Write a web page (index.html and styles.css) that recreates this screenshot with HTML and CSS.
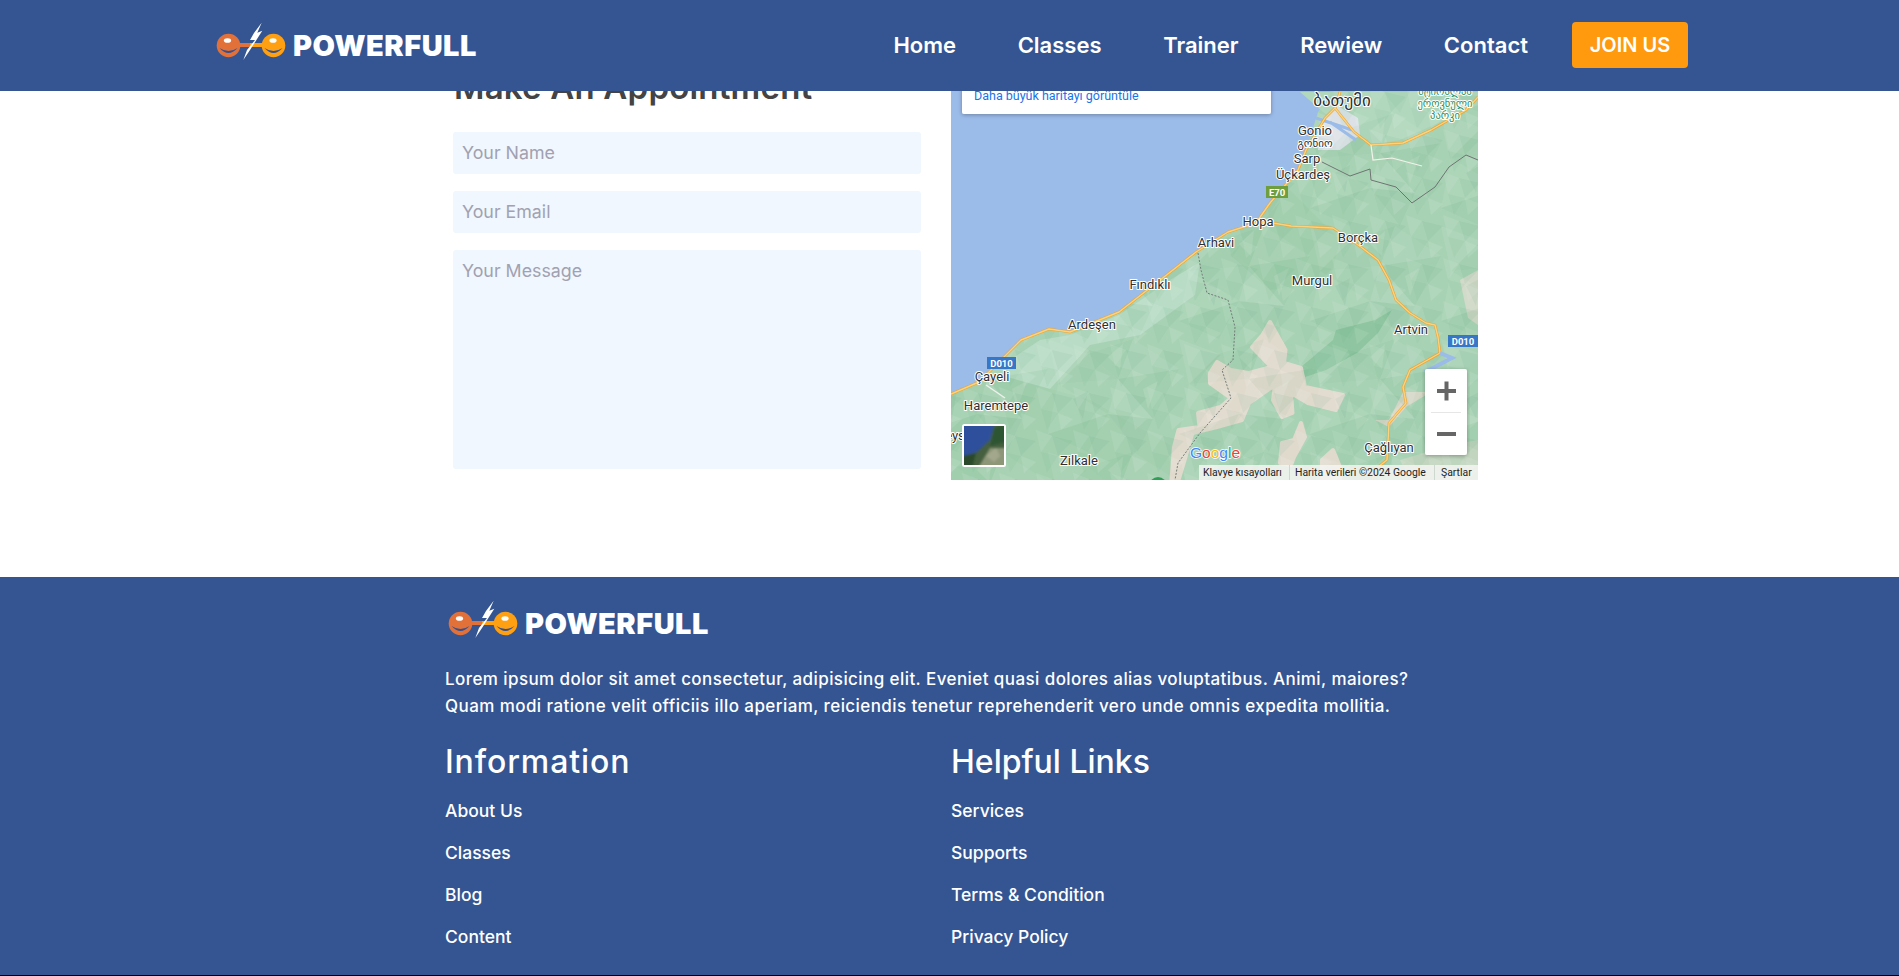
FILE: index.html
```html
<!DOCTYPE html>
<html lang="en">
<head>
<meta charset="utf-8">
<title>Powerfull</title>
<link rel="stylesheet" href="styles.css">
</head>
<body>
<svg class="defs" width="0" height="0" aria-hidden="true">
  <defs>
    <symbol id="logo-mark" viewBox="216 23 70 45">
      <rect x="239" y="43" width="12" height="4" fill="#e27039"/>
      <rect x="250" y="43" width="13" height="4" fill="#ffa012"/>
      <circle cx="228.500" cy="45.500" r="11.800" fill="#e27039"/>
      <circle cx="273.500" cy="45.500" r="11.800" fill="#ffa012"/>
      <ellipse cx="227.500" cy="40.500" rx="3.600" ry="2.300" fill="#fff"/>
      <ellipse cx="273" cy="40.500" rx="3.600" ry="2.300" fill="#fff"/>
      <path d="M219.500 48 q9 10 18 0 q-9 6 -18 0z" fill="#34508f"/>
      <path d="M264.500 48 q9 10 18 0 q-9 6 -18 0z" fill="#34508f"/>
      <polygon points="261.700,22.700 254,33 250,40 255,40 247,50 243.300,60 250,50 262.300,30.700 257.300,32.700" fill="#fff"/>
    </symbol>
    <pattern id="facets-a" width="131" height="113" patternUnits="userSpaceOnUse">
      <polygon points="0,0 40,15 10,45" fill="#fff" opacity=".07"/>
      <polygon points="40,15 85,0 70,40" fill="#3f8f68" opacity=".06"/>
      <polygon points="85,0 131,30 70,40" fill="#fff" opacity=".05"/>
      <polygon points="10,45 40,15 70,40" fill="#3f8f68" opacity=".04"/>
      <polygon points="10,45 60,75 0,95" fill="#fff" opacity=".06"/>
      <polygon points="70,40 131,30 105,80" fill="#3f8f68" opacity=".06"/>
      <polygon points="70,40 105,80 60,75" fill="#fff" opacity=".08"/>
      <polygon points="60,75 105,80 90,113" fill="#3f8f68" opacity=".05"/>
      <polygon points="0,95 60,75 40,113" fill="#3f8f68" opacity=".06"/>
      <polygon points="60,18 75,5 72,30" fill="#fff" opacity=".1"/>
      <polygon points="25,60 40,52 35,80" fill="#3f8f68" opacity=".08"/>
      <polygon points="95,50 110,42 100,70" fill="#fff" opacity=".1"/>
    </pattern>
    <pattern id="facets-b" width="37" height="43" patternUnits="userSpaceOnUse">
      <polygon points="0,0 16,6 5,22" fill="#fff" opacity=".08"/>
      <polygon points="16,6 37,11 22,26" fill="#3f8f68" opacity=".07"/>
      <polygon points="5,22 22,26 11,43" fill="#3f8f68" opacity=".06"/>
      <polygon points="22,26 37,32 25,43" fill="#fff" opacity=".09"/>
    </pattern>
    <filter id="card-shadow" x="-5%" y="-20%" width="110%" height="150%">
      <feDropShadow dx="0" dy="1" stdDeviation="2" flood-color="#000" flood-opacity=".3"/>
    </filter>
    <filter id="thumb-blur"><feGaussianBlur stdDeviation=".8"/></filter>
    <clipPath id="thumb-clip"><rect x="964" y="426" width="40" height="39"/></clipPath>
  </defs>
</svg>

<header class="site-header">
  <a class="brand" href="#">
    <svg class="brand-mark"><use href="#logo-mark"/></svg>
    <span class="brand-text">POWERFULL</span>
  </a>
  <nav class="site-nav">
    <a href="#">Home</a>
    <a href="#">Classes</a>
    <a href="#">Trainer</a>
    <a href="#">Rewiew</a>
    <a href="#">Contact</a>
    <a class="join" href="#">JOIN US</a>
  </nav>
</header>

<main class="appointment">
  <form class="appointment-form">
    <h2>Make An Appointment</h2>
    <input type="text" placeholder="Your Name">
    <input type="email" placeholder="Your Email">
    <textarea placeholder="Your Message"></textarea>
  </form>
  <div class="map">
    <svg class="map-svg" viewBox="951 30 527 450" width="527" height="450" role="img" aria-label="Map">
      <rect x="951" y="30" width="527" height="450" fill="#9bbbe9"/>
      <polygon points="1336,30 1330,95 1318,112 1306,150 1298,170 1287,183 1270,203 1256,223 1228,232 1196,252 1164,277 1119,312 1070,332 1049,329 1021,340 1003,358 979,382 951,394 951,480 1478,480 1478,30" fill="#a8d2b4"/>
      <polygon points="1070,335 1119,315 1170,280 1200,262 1195,295 1140,335 1090,345 1040,400 1000,400 1010,360 1040,340" fill="#b8dcc5"/>
      <polygon points="1290,190 1340,240 1330,280 1270,290 1230,255 1260,225" fill="#a2cfae"/>
      <polygon points="951,394 1000,375 1090,400 1170,445 1175,480 951,480" fill="#a4d0b0"/>
      <polygon points="1300,92 1478,92 1478,105 1400,140 1370,145 1330,118" fill="#b1d8bd"/>
      <polygon points="1301,367 1333,340 1336,330 1375,320 1392,310 1378,333 1357,353 1326,370 1305,377" fill="#8fc6a1"/>
      <polygon class="rock" points="1270,322 1285.500,350 1284,363 1301,368 1305,387 1343,395 1336,410 1308,403 1291,393 1292.500,413 1282,417 1273,400 1275,385 1249,403 1242,420 1217,427 1192.500,433 1185.500,457 1178.500,480 1171.500,480 1174,447 1178.500,430 1199.500,427 1198,413 1220.600,407 1231,398 1210,383 1210,373 1217,362 1231,370 1249,373 1271.500,367 1252,347 1262.500,335"/>
      <polygon class="rock" points="1301,423 1305,437 1294,457 1291,465 1280,463 1282,443 1294,440"/>
      <polygon class="rock" points="1333,450 1340,467 1340,480 1322,480 1322,460"/>
      <polygon points="1375,420 1389,420 1403,392 1431,392 1406,407 1389,427" fill="#d9d7c7"/>
      <polygon points="1400,460 1450,445 1478,440 1478,480 1410,480" fill="#d7d8c9" opacity=".55"/>
      <polygon points="1460,280 1478,270 1478,325 1468,318" fill="#e0dacd" opacity=".7"/>
      <polygon points="1316,130 1336,105 1358,118 1360,135 1340,150 1318,150" fill="#dbe1e6"/>
      <polygon points="1336,30 1330,95 1318,112 1306,150 1298,170 1287,183 1270,203 1256,223 1228,232 1196,252 1164,277 1119,312 1070,332 1049,329 1021,340 1003,358 979,382 951,394 951,480 1478,480 1478,30" fill="url(#facets-a)"/>
      <polygon points="1336,30 1330,95 1318,112 1306,150 1298,170 1287,183 1270,203 1256,223 1228,232 1196,252 1164,277 1119,312 1070,332 1049,329 1021,340 1003,358 979,382 951,394 951,480 1478,480 1478,30" fill="url(#facets-b)"/>
      <path d="M1316 118 L1352 130 M1330 122 L1356 140" stroke="#9bbbe9" stroke-width="3" fill="none"/>
      <path d="M986 385 L1005 398" stroke="#eef0ea" stroke-width="1.500" fill="none"/>
      <path class="road-edge" d="M1340 92 L1335 108 L1325 118 L1306 150 L1298 170 L1287 183 L1270 203 L1256 223 L1228 232 L1196 252 L1164 277 L1119 312 L1070 332 L1049 329 L1021 340 L1003 358 L979 382 951 394"/>
      <path class="road-edge" d="M1256 223 L1273 223 L1291 226 L1333 228 L1361 247 L1378 260 L1389 280 L1396 300 L1410 313 L1426 323 L1435 325 L1438 337 L1440 353 L1410 370 L1403 387 L1406 403 L1389 423 L1387 460 L1378 467 L1372 480"/>
      <path class="road-edge" d="M1335 108 L1354 132 L1371 145 L1403 143 L1431 130 L1466 110 L1478 97"/>
      <path class="road" d="M1340 92 L1335 108 L1325 118 L1306 150 L1298 170 L1287 183 L1270 203 L1256 223 L1228 232 L1196 252 L1164 277 L1119 312 L1070 332 L1049 329 L1021 340 L1003 358 L979 382 951 394"/>
      <path class="road" d="M1256 223 L1273 223 L1291 226 L1333 228 L1361 247 L1378 260 L1389 280 L1396 300 L1410 313 L1426 323 L1435 325 L1438 337 L1440 353 L1410 370 L1403 387 L1406 403 L1389 423 L1387 460 L1378 467 L1372 480"/>
      <path class="road" d="M1335 108 L1354 132 L1371 145 L1403 143 L1431 130 L1466 110 L1478 97"/>
      <path d="M1371 145 L1373 160 L1392 158 L1422 166" stroke="#f3f3ea" stroke-width="1.200" fill="none"/>
      <path d="M1440 353 L1452 358 L1425 372" stroke="#9bbbe9" stroke-width="4" fill="none"/>
      <path d="M1322 162 L1350 176 L1370 169 L1371 180 L1396 187 L1412 203 L1435 187 L1449 167 L1466 155 L1478 160" stroke="#6f7472" stroke-width="1" fill="none"/>
      <path d="M1198 253 L1201 270 L1207 293 L1228 300 L1235 327 L1233 360 L1222 370 L1231 398 L1200 433 L1178 463 L1175 480" stroke="#747c78" stroke-width="1" stroke-dasharray="2 1.500" fill="none"/>
      <circle cx="1158" cy="486" r="9" fill="#2f9e57"/>
      <text class="lbl geo-big" x="1342" y="106">ბათუმი</text>
      <text class="lbl park" x="1445" y="95">მტირალას</text>
      <text class="lbl park" x="1445" y="107">ეროვნული</text>
      <text class="lbl park" x="1445" y="119">პარკი</text>
      <text class="lbl" x="1315" y="134.500">Gonio</text>
      <text class="lbl geo-small" x="1315" y="147">გონიო</text>
      <text class="lbl" x="1307" y="163">Sarp</text>
      <text class="lbl" x="1303" y="179">Üçkardeş</text>
      <text class="lbl" x="1258" y="226">Hopa</text>
      <text class="lbl" x="1216" y="247">Arhavi</text>
      <text class="lbl" x="1358" y="242">Borçka</text>
      <text class="lbl" x="1312" y="285">Murgul</text>
      <text class="lbl" x="1150" y="289">Fındıklı</text>
      <text class="lbl" x="1092" y="329">Ardeşen</text>
      <text class="lbl" x="1411" y="334">Artvin</text>
      <text class="lbl" x="992" y="381">Çayeli</text>
      <text class="lbl" x="996" y="410">Haremtepe</text>
      <text class="lbl" x="1079" y="465">Zilkale</text>
      <text class="lbl" x="1389" y="452">Çağlıyan</text>
      <text class="lbl" x="955" y="440">eys</text>
      <rect class="shield-green" x="1266" y="186" width="22" height="12"/>
      <text class="shield-text" x="1277" y="195.500">E70</text>
      <rect class="shield-blue" x="987" y="357" width="29" height="12"/>
      <text class="shield-text" x="1001.500" y="366.500">D010</text>
      <rect class="shield-blue" x="1448" y="335" width="30" height="12"/>
      <text class="shield-text" x="1463" y="344.500">D010</text>

      <rect x="962" y="30" width="309" height="84" rx="2" fill="#fff" filter="url(#card-shadow)"/>
      <text class="map-link" x="974" y="100">Daha büyük haritayı görüntüle</text>

      <rect x="962" y="424" width="44" height="43" rx="2.500" fill="#fff"/>
      <g clip-path="url(#thumb-clip)">
        <rect x="964" y="426" width="40" height="39" fill="#46603f"/>
        <g filter="url(#thumb-blur)">
          <polygon points="960,422 995,422 990,440 977,452 960,457" fill="#2f4f9c"/>
          <polygon points="1006,448 990,448 978,468 1006,468" fill="#8e9678"/>
          <polygon points="986,456 996,448 1000,456 994,462" fill="#a3a88c"/>
          <polygon points="994,428 1006,424 1006,442 990,446" fill="#2d5433"/>
          <polygon points="962,456 976,453 972,468 962,468" fill="#2a4a2c"/>
        </g>
      </g>

      <text class="g-logo" x="1190" y="457.500"><tspan fill="#4285f4">G</tspan><tspan fill="#ea4335">o</tspan><tspan fill="#fbbc05">o</tspan><tspan fill="#4285f4">g</tspan><tspan fill="#34a853">l</tspan><tspan fill="#ea4335">e</tspan></text>

      <rect x="1425" y="369" width="42" height="86" rx="2" fill="#fff" filter="url(#card-shadow)"/>
      <rect x="1431" y="412" width="30" height="1" fill="#e6e6e6"/>
      <path d="M1437 391 H1456 M1446.500 381.500 V400.500" stroke="#666" stroke-width="4" fill="none"/>
      <path d="M1437 434 H1456" stroke="#666" stroke-width="4" fill="none"/>

      <rect x="1199" y="465" width="279" height="15" fill="#f4f4f2" fill-opacity=".85"/>
      <rect x="1289" y="465" width="1" height="15" fill="#cfd8d0"/>
      <rect x="1434" y="465" width="1" height="15" fill="#cfd8d0"/>
      <text class="attr" x="1203" y="476">Klavye kısayolları</text>
      <text class="attr" x="1295" y="476">Harita verileri ©2024 Google</text>
      <text class="attr" x="1441" y="476">Şartlar</text>
    </svg>
  </div>
</main>

<footer class="site-footer">
  <a class="brand footer-brand" href="#">
    <svg class="brand-mark"><use href="#logo-mark"/></svg>
    <span class="brand-text">POWERFULL</span>
  </a>
  <p class="blurb">Lorem ipsum dolor sit amet consectetur, adipisicing elit. Eveniet quasi dolores alias voluptatibus. Animi, maiores?<br>Quam modi ratione velit officiis illo aperiam, reiciendis tenetur reprehenderit vero unde omnis expedita mollitia.</p>
  <div class="footer-cols">
    <section>
      <h3 class="stretch">Information</h3>
      <ul>
        <li><a href="#">About Us</a></li>
        <li><a href="#">Classes</a></li>
        <li><a href="#">Blog</a></li>
        <li><a href="#">Content</a></li>
      </ul>
    </section>
    <section>
      <h3>Helpful Links</h3>
      <ul>
        <li><a href="#">Services</a></li>
        <li><a href="#">Supports</a></li>
        <li><a href="#">Terms &amp; Condition</a></li>
        <li><a href="#">Privacy Policy</a></li>
      </ul>
    </section>
  </div>
</footer>
</body>
</html>
```
FILE: styles.css
```css
* { box-sizing: border-box; }
html, body { margin: 0; padding: 0; }
body {
  height: 976px;
  overflow: hidden;
  background: #fff;
  color: #fff;
  font-family: Inter, "Liberation Sans", sans-serif;
  position: relative;
}
a { color: inherit; text-decoration: none; }
.defs { position: absolute; }

.site-header {
  position: absolute;
  top: 0; left: 0; right: 0;
  z-index: 10;
  height: 91px;
  background: #345592;
  display: flex;
  align-items: center;
  justify-content: space-between;
  padding: 0 211px 0 216px;
}
.brand { display: flex; align-items: center; gap: 7px; }
.brand-mark { width: 70px; height: 45px; flex: none; }
.brand-text {
  font-weight: 900;
  font-size: 29px;
  letter-spacing: .5px;
  line-height: 40px;
}
.site-nav { display: flex; align-items: center; gap: 61.600px; font-size: 22px; font-weight: 600; margin-top: -2px; }
.site-nav .join {
  width: 116px;
  height: 46px;
  margin-left: -17.600px;
  display: flex;
  align-items: center;
  justify-content: center;
  background: #ff990d;
  border-radius: 4px;
  font-size: 20px;
}

.appointment {
  height: 577px;
  padding: 30px 0 0 453px;
  display: flex;
  gap: 30px;
  align-items: flex-start;
}
.appointment-form { width: 468px; display: flex; flex-direction: column; gap: 17px; }
.appointment-form h2 {
  margin: 35px 0 0 1px;
  height: 50px;
  font-size: 33px;
  letter-spacing: .2px;
  line-height: 44px;
  font-weight: 600;
  color: #444;
}
.appointment-form input, .appointment-form textarea {
  display: block;
  width: 100%;
  border: 0;
  border-radius: 3px;
  background: #f0f7ff;
  padding: 0 9px;
  font: 400 17.800px/24px Inter, "Liberation Sans", sans-serif;
  color: #444;
  outline: 0;
  resize: none;
}
.appointment-form input { height: 42px; padding-bottom: 2px; }
.appointment-form textarea { height: 219px; padding-top: 9px; }
.appointment-form ::placeholder { color: #a1a1b0; opacity: 1; }

.map { width: 527px; height: 450px; flex: none; }
.map-svg { display: block; }
.rock { fill: #e0dacd; stroke: #e0dacd; stroke-width: 4px; stroke-linejoin: round; }
.road, .road-edge { fill: none; stroke-linejoin: round; }
.road { stroke: #fdd27a; stroke-width: 1.400; }
.road-edge { stroke: #eaa53a; stroke-width: 2.600; }
.lbl {
  font-family: Roboto, sans-serif;
  font-size: 13px;
  fill: #303030;
  text-anchor: middle;
  paint-order: stroke;
  stroke: #fff;
  stroke-width: 2px;
  stroke-linejoin: round;
}
.lbl.geo-big { font-family: "DejaVu Sans", sans-serif; font-size: 17px; }
.lbl.geo-small { font-family: "DejaVu Sans", sans-serif; font-size: 11px; }
.lbl.park { font-family: "DejaVu Sans", sans-serif; font-size: 10.500px; fill: #2f8f57; }
.shield-green { fill: #6f9e3e; }
.shield-blue { fill: #3777c8; }
.shield-text { font: 700 9.500px Roboto, sans-serif; fill: #fff; text-anchor: middle; }
.map-link { font: 400 12.500px Roboto, sans-serif; fill: #1a73e8; }
.g-logo { font: 500 15.500px "Liberation Sans", sans-serif; paint-order: stroke; stroke: #fff; stroke-width: 1.500px; }
.attr { font: 400 10.400px Roboto, sans-serif; fill: #222; }

.site-footer {
  height: 399px;
  background: #345592;
  border-bottom: 1px solid #000;
  padding: 24px 0 0 445px;
}
.footer-brand { margin-left: 3px; }
.blurb {
  margin: 20px 0 0;
  font-size: 17px;
  letter-spacing: .42px;
  line-height: 27px;
  font-weight: 500;
}
.footer-cols { display: flex; margin-top: 20px; }
.footer-cols section { width: 506px; }
.footer-cols h3 {
  margin: 0 0 15px;
  font-size: 32px;
  line-height: 44px;
  font-weight: 500;
}
.footer-cols h3.stretch { letter-spacing: .9px; }
.footer-cols ul { list-style: none; margin: 0; padding: 0; display: flex; flex-direction: column; gap: 18px; }
.footer-cols li { font-size: 17.500px; line-height: 24px; font-weight: 500; }
```
